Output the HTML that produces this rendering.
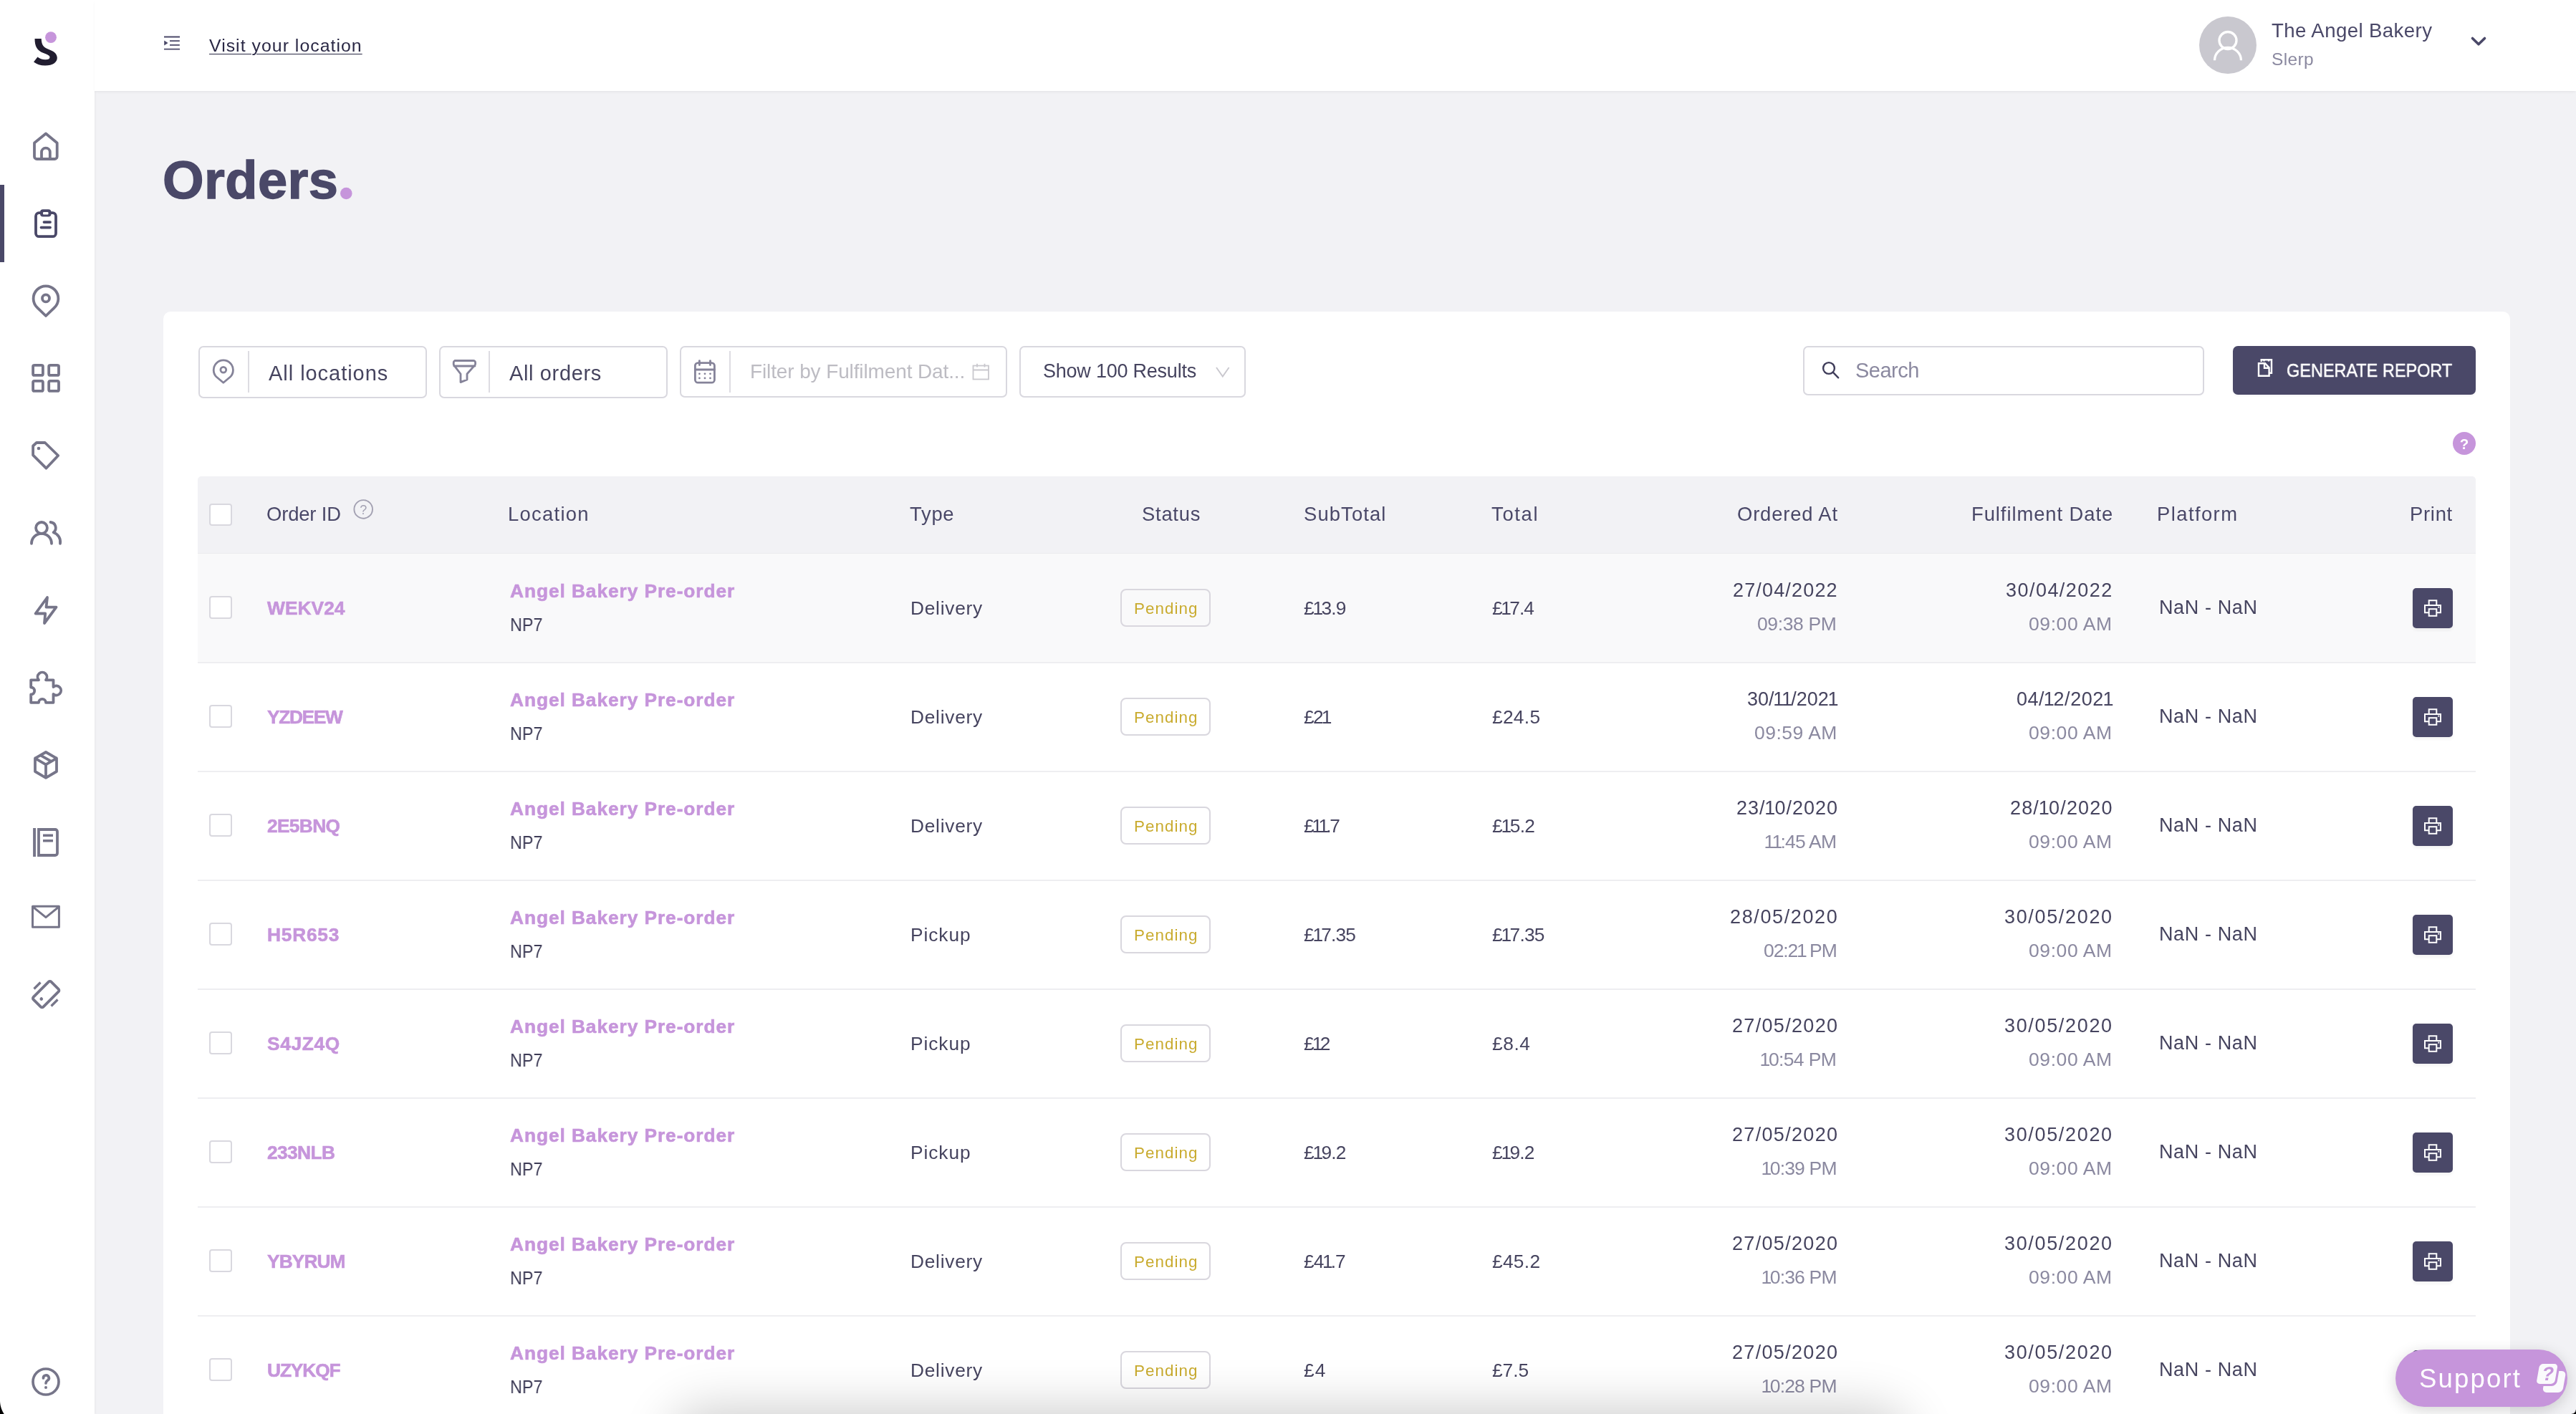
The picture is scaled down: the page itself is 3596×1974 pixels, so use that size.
<!DOCTYPE html>
<html><head><meta charset="utf-8"><title>Orders</title><style>
*{box-sizing:border-box;margin:0;padding:0}
html,body{width:3596px;height:1974px;overflow:hidden}
body{position:relative;background:#f2f2f5;font-family:"Liberation Sans",sans-serif}
.a{position:absolute}
.t{position:absolute;line-height:1;white-space:nowrap}
body{-webkit-font-smoothing:antialiased}
.t{will-change:transform}
svg{position:absolute;overflow:visible}
</style></head>
<body>
<div class="a" style="left:0;top:0;width:132px;height:1974px;background:#fff;box-shadow:1px 0 3px rgba(0,0,0,0.05)"></div>
<div class="a" style="left:132px;top:0;width:3464px;height:127px;background:#fff;box-shadow:0 2px 4px -1px rgba(0,0,0,0.07)"></div>
<div class="a" style="left:0;top:258px;width:6px;height:108px;background:#4a4868"></div>
<div class="a" style="left:228px;top:435px;width:3276px;height:1700px;background:#fff;border-radius:10px"></div>
<div class="a" style="left:277px;top:482.8px;width:319px;height:73.2px;border:2px solid #d9d8df;border-radius:7px;background:#fff"></div>
<div class="a" style="left:612.5px;top:482.8px;width:319.0px;height:73.2px;border:2px solid #d9d8df;border-radius:7px;background:#fff"></div>
<div class="a" style="left:948.5px;top:483.1px;width:457.0px;height:71.6px;border:2px solid #d9d8df;border-radius:7px;background:#fff"></div>
<div class="a" style="left:1422.5px;top:483.1px;width:316.5px;height:71.6px;border:2px solid #d9d8df;border-radius:7px;background:#fff"></div>
<div class="a" style="left:346.2px;top:490px;width:1.6px;height:57.5px;background:#dddce2"></div>
<div class="a" style="left:682.2px;top:490px;width:1.6px;height:57.5px;background:#dddce2"></div>
<div class="a" style="left:1018.2px;top:490px;width:1.6px;height:57.5px;background:#dddce2"></div>
<div class="a" style="left:2517px;top:483.1px;width:559.6px;height:68.8px;border:2px solid #d9d8df;border-radius:7px;background:#fff"></div>
<div class="a" style="left:3117px;top:482.9px;width:338.7px;height:67.9px;background:#4a4868;border-radius:7px;box-shadow:0 2px 3px rgba(0,0,0,0.04)"></div>
<div class="a" style="left:3424px;top:603px;width:32px;height:32px;border-radius:50%;background:#c695db"></div>
<div class="a" style="left:276px;top:665px;width:3180px;height:108px;background:#f2f2f5;border-radius:5px 5px 0 0"></div>
<div class="a" style="left:276px;top:772px;width:3180px;height:1.5px;background:#ececef"></div>
<div class="a" style="left:276px;top:773px;width:3180px;height:152px;background:#f9f9fa"></div>
<div class="a" style="left:276px;top:924px;width:3180px;height:2px;background:#eeeef1"></div>
<div class="a" style="left:276px;top:1076px;width:3180px;height:2px;background:#eeeef1"></div>
<div class="a" style="left:276px;top:1228px;width:3180px;height:2px;background:#eeeef1"></div>
<div class="a" style="left:276px;top:1380px;width:3180px;height:2px;background:#eeeef1"></div>
<div class="a" style="left:276px;top:1532px;width:3180px;height:2px;background:#eeeef1"></div>
<div class="a" style="left:276px;top:1684px;width:3180px;height:2px;background:#eeeef1"></div>
<div class="a" style="left:276px;top:1836px;width:3180px;height:2px;background:#eeeef1"></div>
<div class="a" style="left:276px;top:1988px;width:3180px;height:2px;background:#eeeef1"></div>
<div class="a" style="left:292px;top:702.5px;width:31.5px;height:31.5px;border:2px solid #d9d8df;border-radius:4px;background:#fff"></div>
<div class="a" style="left:292.2px;top:832px;width:31.5px;height:31.5px;border:2px solid #d9d8df;border-radius:4px;background:#fff"></div>
<div class="a" style="left:1564px;top:822px;width:125.8px;height:52.7px;border:2px solid #d9d7de;border-radius:8px"></div>
<div class="a" style="left:3368px;top:821px;width:56px;height:56px;background:#4a4868;border-radius:5px;box-shadow:0 3px 4px rgba(0,0,0,0.05)"></div>
<div class="a" style="left:292.2px;top:984px;width:31.5px;height:31.5px;border:2px solid #d9d8df;border-radius:4px;background:#fff"></div>
<div class="a" style="left:1564px;top:974px;width:125.8px;height:52.7px;border:2px solid #d9d7de;border-radius:8px"></div>
<div class="a" style="left:3368px;top:973px;width:56px;height:56px;background:#4a4868;border-radius:5px;box-shadow:0 3px 4px rgba(0,0,0,0.05)"></div>
<div class="a" style="left:292.2px;top:1136px;width:31.5px;height:31.5px;border:2px solid #d9d8df;border-radius:4px;background:#fff"></div>
<div class="a" style="left:1564px;top:1126px;width:125.8px;height:52.7px;border:2px solid #d9d7de;border-radius:8px"></div>
<div class="a" style="left:3368px;top:1125px;width:56px;height:56px;background:#4a4868;border-radius:5px;box-shadow:0 3px 4px rgba(0,0,0,0.05)"></div>
<div class="a" style="left:292.2px;top:1288px;width:31.5px;height:31.5px;border:2px solid #d9d8df;border-radius:4px;background:#fff"></div>
<div class="a" style="left:1564px;top:1278px;width:125.8px;height:52.7px;border:2px solid #d9d7de;border-radius:8px"></div>
<div class="a" style="left:3368px;top:1277px;width:56px;height:56px;background:#4a4868;border-radius:5px;box-shadow:0 3px 4px rgba(0,0,0,0.05)"></div>
<div class="a" style="left:292.2px;top:1440px;width:31.5px;height:31.5px;border:2px solid #d9d8df;border-radius:4px;background:#fff"></div>
<div class="a" style="left:1564px;top:1430px;width:125.8px;height:52.7px;border:2px solid #d9d7de;border-radius:8px"></div>
<div class="a" style="left:3368px;top:1429px;width:56px;height:56px;background:#4a4868;border-radius:5px;box-shadow:0 3px 4px rgba(0,0,0,0.05)"></div>
<div class="a" style="left:292.2px;top:1592px;width:31.5px;height:31.5px;border:2px solid #d9d8df;border-radius:4px;background:#fff"></div>
<div class="a" style="left:1564px;top:1582px;width:125.8px;height:52.7px;border:2px solid #d9d7de;border-radius:8px"></div>
<div class="a" style="left:3368px;top:1581px;width:56px;height:56px;background:#4a4868;border-radius:5px;box-shadow:0 3px 4px rgba(0,0,0,0.05)"></div>
<div class="a" style="left:292.2px;top:1744px;width:31.5px;height:31.5px;border:2px solid #d9d8df;border-radius:4px;background:#fff"></div>
<div class="a" style="left:1564px;top:1734px;width:125.8px;height:52.7px;border:2px solid #d9d7de;border-radius:8px"></div>
<div class="a" style="left:3368px;top:1733px;width:56px;height:56px;background:#4a4868;border-radius:5px;box-shadow:0 3px 4px rgba(0,0,0,0.05)"></div>
<div class="a" style="left:292.2px;top:1896px;width:31.5px;height:31.5px;border:2px solid #d9d8df;border-radius:4px;background:#fff"></div>
<div class="a" style="left:1564px;top:1886px;width:125.8px;height:52.7px;border:2px solid #d9d7de;border-radius:8px"></div>
<div class="a" style="left:3368px;top:1885px;width:56px;height:56px;background:#4a4868;border-radius:5px;box-shadow:0 3px 4px rgba(0,0,0,0.05)"></div>
<div class="t" style="top:52.01px;font-size:24.8px;color:#2a2845;letter-spacing:1.04px;left:292.0px;text-decoration:underline;text-decoration-thickness:1.2px;text-underline-offset:2.5px;">Visit your location</div>
<div class="t" style="top:28.84px;font-size:27.6px;color:#4a4868;letter-spacing:0.41px;left:3171.0px;">The Angel Bakery</div>
<div class="t" style="top:71.26px;font-size:24.5px;color:#8b89a0;letter-spacing:0.35px;left:3171.0px;">Slerp</div>
<div class="t" style="top:215.16px;font-size:74px;color:#4a4868;font-weight:700;letter-spacing:0.47px;left:227.2px;-webkit-text-stroke:1.4px #4a4868;">Orders</div>
<div class="t" style="top:507.45px;font-size:29px;color:#46445f;letter-spacing:0.96px;left:375.0px;">All locations</div>
<div class="t" style="top:507.45px;font-size:29px;color:#46445f;letter-spacing:0.64px;left:710.7px;">All orders</div>
<div class="t" style="top:504.70px;font-size:28px;color:#bdbcc3;letter-spacing:-0.12px;left:1046.6px;">Filter by Fulfilment Dat...</div>
<div class="t" style="top:504.94px;font-size:27px;color:#46445f;letter-spacing:-0.23px;left:1456.3px;">Show 100 Results</div>
<div class="t" style="top:502.65px;font-size:29px;color:#8b89a0;letter-spacing:-0.52px;left:2590.0px;">Search</div>
<div class="t" style="top:504.38px;font-size:26.6px;color:#ffffff;left:3191.5px;transform:scaleX(0.8823);transform-origin:left center;-webkit-text-stroke:0.5px #fff;">GENERATE REPORT</div>
<div class="t" style="top:704.01px;font-size:27.4px;color:#4a4868;letter-spacing:-0.15px;left:372.2px;">Order ID</div>
<div class="t" style="top:704.01px;font-size:27.4px;color:#4a4868;letter-spacing:1.29px;left:708.8px;">Location</div>
<div class="t" style="top:704.01px;font-size:27.4px;color:#4a4868;letter-spacing:0.74px;left:1270.0px;">Type</div>
<div class="t" style="top:704.01px;font-size:27.4px;color:#4a4868;letter-spacing:0.75px;left:1593.6px;">Status</div>
<div class="t" style="top:704.01px;font-size:27.4px;color:#4a4868;letter-spacing:1.12px;left:1819.6px;">SubTotal</div>
<div class="t" style="top:704.01px;font-size:27.4px;color:#4a4868;letter-spacing:1.69px;left:2082.0px;">Total</div>
<div class="t" style="top:704.01px;font-size:27.4px;color:#4a4868;letter-spacing:0.84px;right:1030.6px;margin-right:-0.84px;">Ordered At</div>
<div class="t" style="top:704.01px;font-size:27.4px;color:#4a4868;letter-spacing:0.93px;right:647.0px;margin-right:-0.93px;">Fulfilment Date</div>
<div class="t" style="top:704.01px;font-size:27.4px;color:#4a4868;letter-spacing:1.43px;left:3011.0px;">Platform</div>
<div class="t" style="top:704.01px;font-size:27.4px;color:#4a4868;letter-spacing:0.72px;right:172.8px;margin-right:-0.72px;">Print</div>
<div class="t" style="top:835.74px;font-size:26.3px;color:#c695db;font-weight:700;letter-spacing:0.07px;left:372.6px;-webkit-text-stroke:0.6px #c695db;">WEKV24</div>
<div class="t" style="top:811.74px;font-size:26.3px;color:#c695db;font-weight:700;letter-spacing:0.93px;left:711.5px;-webkit-text-stroke:0.6px #c695db;">Angel Bakery Pre-order</div>
<div class="t" style="top:858.54px;font-size:26.3px;color:#3d3b56;left:711.5px;transform:scaleX(0.8894);transform-origin:left center;">NP7</div>
<div class="t" style="top:835.54px;font-size:26.3px;color:#46445f;letter-spacing:0.75px;left:1271.0px;">Delivery</div>
<div class="t" style="top:838.64px;font-size:22.4px;color:#c9ab2e;letter-spacing:1.05px;left:1583.2px;">Pending</div>
<div class="t" style="top:835.94px;font-size:26.3px;color:#46445f;letter-spacing:-0.84px;left:1820.2px;">£<i style="font-style:normal;margin:0 -1.8px 0 -1.4px">1</i>3.9</div>
<div class="t" style="top:835.94px;font-size:26.3px;color:#46445f;letter-spacing:-0.91px;left:2082.6px;">£<i style="font-style:normal;margin:0 -1.8px 0 -1.4px">1</i>7.4</div>
<div class="t" style="top:810.94px;font-size:27px;color:#46445f;letter-spacing:1.16px;right:1031.0px;margin-right:-1.16px;">27/04/2022</div>
<div class="t" style="top:858.27px;font-size:26.5px;color:#8b89a0;letter-spacing:-0.38px;right:1031.8px;margin-right:0.38px;">09:38 PM</div>
<div class="t" style="top:811.04px;font-size:27px;color:#46445f;letter-spacing:1.46px;right:647.8px;margin-right:-1.46px;">30/04/2022</div>
<div class="t" style="top:858.27px;font-size:26.5px;color:#8b89a0;letter-spacing:0.58px;right:648.0px;margin-right:-0.58px;">09:00 AM</div>
<div class="t" style="top:835.34px;font-size:27px;color:#46445f;letter-spacing:0.62px;left:3013.5px;">NaN - NaN</div>
<div class="t" style="top:987.74px;font-size:26.3px;color:#c695db;font-weight:700;letter-spacing:-1.34px;left:372.6px;-webkit-text-stroke:0.6px #c695db;">YZDEEW</div>
<div class="t" style="top:963.74px;font-size:26.3px;color:#c695db;font-weight:700;letter-spacing:0.93px;left:711.5px;-webkit-text-stroke:0.6px #c695db;">Angel Bakery Pre-order</div>
<div class="t" style="top:1010.54px;font-size:26.3px;color:#3d3b56;left:711.5px;transform:scaleX(0.8894);transform-origin:left center;">NP7</div>
<div class="t" style="top:987.54px;font-size:26.3px;color:#46445f;letter-spacing:0.75px;left:1271.0px;">Delivery</div>
<div class="t" style="top:990.64px;font-size:22.4px;color:#c9ab2e;letter-spacing:1.05px;left:1583.2px;">Pending</div>
<div class="t" style="top:987.94px;font-size:26.3px;color:#46445f;letter-spacing:-1.61px;left:1820.2px;">£2<i style="font-style:normal;margin:0 -1.8px 0 -1.4px">1</i></div>
<div class="t" style="top:987.94px;font-size:26.3px;color:#46445f;letter-spacing:0.30px;left:2082.6px;">£24.5</div>
<div class="t" style="top:962.94px;font-size:27px;color:#46445f;letter-spacing:0.01px;right:1031.0px;margin-right:-0.01px;">30/<i style="font-style:normal;margin:0 -1.8px 0 -1.4px">1</i><i style="font-style:normal;margin:0 -1.8px 0 -1.4px">1</i>/202<i style="font-style:normal;margin:0 -1.8px 0 -1.4px">1</i></div>
<div class="t" style="top:1010.27px;font-size:26.5px;color:#8b89a0;letter-spacing:0.49px;right:1031.8px;margin-right:-0.49px;">09:59 AM</div>
<div class="t" style="top:963.04px;font-size:27px;color:#46445f;letter-spacing:0.54px;right:647.8px;margin-right:-0.54px;">04/<i style="font-style:normal;margin:0 -1.8px 0 -1.4px">1</i>2/202<i style="font-style:normal;margin:0 -1.8px 0 -1.4px">1</i></div>
<div class="t" style="top:1010.27px;font-size:26.5px;color:#8b89a0;letter-spacing:0.58px;right:648.0px;margin-right:-0.58px;">09:00 AM</div>
<div class="t" style="top:987.34px;font-size:27px;color:#46445f;letter-spacing:0.62px;left:3013.5px;">NaN - NaN</div>
<div class="t" style="top:1139.74px;font-size:26.3px;color:#c695db;font-weight:700;letter-spacing:-0.65px;left:372.6px;-webkit-text-stroke:0.6px #c695db;">2E5BNQ</div>
<div class="t" style="top:1115.74px;font-size:26.3px;color:#c695db;font-weight:700;letter-spacing:0.93px;left:711.5px;-webkit-text-stroke:0.6px #c695db;">Angel Bakery Pre-order</div>
<div class="t" style="top:1162.54px;font-size:26.3px;color:#3d3b56;left:711.5px;transform:scaleX(0.8894);transform-origin:left center;">NP7</div>
<div class="t" style="top:1139.54px;font-size:26.3px;color:#46445f;letter-spacing:0.75px;left:1271.0px;">Delivery</div>
<div class="t" style="top:1142.64px;font-size:22.4px;color:#c9ab2e;letter-spacing:1.05px;left:1583.2px;">Pending</div>
<div class="t" style="top:1139.94px;font-size:26.3px;color:#46445f;letter-spacing:-2.12px;left:1820.2px;">£<i style="font-style:normal;margin:0 -1.8px 0 -1.4px">1</i><i style="font-style:normal;margin:0 -1.8px 0 -1.4px">1</i>.7</div>
<div class="t" style="top:1139.94px;font-size:26.3px;color:#46445f;letter-spacing:-0.66px;left:2082.6px;">£<i style="font-style:normal;margin:0 -1.8px 0 -1.4px">1</i>5.2</div>
<div class="t" style="top:1114.94px;font-size:27px;color:#46445f;letter-spacing:1.00px;right:1031.0px;margin-right:-1.00px;">23/<i style="font-style:normal;margin:0 -1.8px 0 -1.4px">1</i>0/2020</div>
<div class="t" style="top:1162.27px;font-size:26.5px;color:#8b89a0;letter-spacing:-0.80px;right:1031.8px;margin-right:0.80px;"><i style="font-style:normal;margin:0 -1.8px 0 -1.4px">1</i><i style="font-style:normal;margin:0 -1.8px 0 -1.4px">1</i>:45 AM</div>
<div class="t" style="top:1115.04px;font-size:27px;color:#46445f;letter-spacing:1.17px;right:647.8px;margin-right:-1.17px;">28/<i style="font-style:normal;margin:0 -1.8px 0 -1.4px">1</i>0/2020</div>
<div class="t" style="top:1162.27px;font-size:26.5px;color:#8b89a0;letter-spacing:0.58px;right:648.0px;margin-right:-0.58px;">09:00 AM</div>
<div class="t" style="top:1139.34px;font-size:27px;color:#46445f;letter-spacing:0.62px;left:3013.5px;">NaN - NaN</div>
<div class="t" style="top:1291.74px;font-size:26.3px;color:#c695db;font-weight:700;letter-spacing:0.78px;left:372.6px;-webkit-text-stroke:0.6px #c695db;">H5R653</div>
<div class="t" style="top:1267.74px;font-size:26.3px;color:#c695db;font-weight:700;letter-spacing:0.93px;left:711.5px;-webkit-text-stroke:0.6px #c695db;">Angel Bakery Pre-order</div>
<div class="t" style="top:1314.54px;font-size:26.3px;color:#3d3b56;left:711.5px;transform:scaleX(0.8894);transform-origin:left center;">NP7</div>
<div class="t" style="top:1291.54px;font-size:26.3px;color:#46445f;letter-spacing:0.93px;left:1271.0px;">Pickup</div>
<div class="t" style="top:1294.64px;font-size:22.4px;color:#c9ab2e;letter-spacing:1.05px;left:1583.2px;">Pending</div>
<div class="t" style="top:1291.94px;font-size:26.3px;color:#46445f;letter-spacing:-0.86px;left:1820.2px;">£<i style="font-style:normal;margin:0 -1.8px 0 -1.4px">1</i>7.35</div>
<div class="t" style="top:1291.94px;font-size:26.3px;color:#46445f;letter-spacing:-0.76px;left:2082.6px;">£<i style="font-style:normal;margin:0 -1.8px 0 -1.4px">1</i>7.35</div>
<div class="t" style="top:1266.94px;font-size:27px;color:#46445f;letter-spacing:1.62px;right:1031.0px;margin-right:-1.62px;">28/05/2020</div>
<div class="t" style="top:1314.27px;font-size:26.5px;color:#8b89a0;letter-spacing:-1.08px;right:1031.8px;margin-right:1.08px;">02:2<i style="font-style:normal;margin:0 -1.8px 0 -1.4px">1</i> PM</div>
<div class="t" style="top:1267.04px;font-size:27px;color:#46445f;letter-spacing:1.66px;right:647.8px;margin-right:-1.66px;">30/05/2020</div>
<div class="t" style="top:1314.27px;font-size:26.5px;color:#8b89a0;letter-spacing:0.58px;right:648.0px;margin-right:-0.58px;">09:00 AM</div>
<div class="t" style="top:1291.34px;font-size:27px;color:#46445f;letter-spacing:0.62px;left:3013.5px;">NaN - NaN</div>
<div class="t" style="top:1443.74px;font-size:26.3px;color:#c695db;font-weight:700;letter-spacing:0.65px;left:372.6px;-webkit-text-stroke:0.6px #c695db;">S4JZ4Q</div>
<div class="t" style="top:1419.74px;font-size:26.3px;color:#c695db;font-weight:700;letter-spacing:0.93px;left:711.5px;-webkit-text-stroke:0.6px #c695db;">Angel Bakery Pre-order</div>
<div class="t" style="top:1466.54px;font-size:26.3px;color:#3d3b56;left:711.5px;transform:scaleX(0.8894);transform-origin:left center;">NP7</div>
<div class="t" style="top:1443.54px;font-size:26.3px;color:#46445f;letter-spacing:0.93px;left:1271.0px;">Pickup</div>
<div class="t" style="top:1446.64px;font-size:22.4px;color:#c9ab2e;letter-spacing:1.05px;left:1583.2px;">Pending</div>
<div class="t" style="top:1443.94px;font-size:26.3px;color:#46445f;letter-spacing:-1.62px;left:1820.2px;">£<i style="font-style:normal;margin:0 -1.8px 0 -1.4px">1</i>2</div>
<div class="t" style="top:1443.94px;font-size:26.3px;color:#46445f;letter-spacing:0.60px;left:2082.6px;">£8.4</div>
<div class="t" style="top:1418.94px;font-size:27px;color:#46445f;letter-spacing:1.32px;right:1031.0px;margin-right:-1.32px;">27/05/2020</div>
<div class="t" style="top:1466.27px;font-size:26.5px;color:#8b89a0;letter-spacing:-0.64px;right:1031.8px;margin-right:0.64px;"><i style="font-style:normal;margin:0 -1.8px 0 -1.4px">1</i>0:54 PM</div>
<div class="t" style="top:1419.04px;font-size:27px;color:#46445f;letter-spacing:1.66px;right:647.8px;margin-right:-1.66px;">30/05/2020</div>
<div class="t" style="top:1466.27px;font-size:26.5px;color:#8b89a0;letter-spacing:0.58px;right:648.0px;margin-right:-0.58px;">09:00 AM</div>
<div class="t" style="top:1443.34px;font-size:27px;color:#46445f;letter-spacing:0.62px;left:3013.5px;">NaN - NaN</div>
<div class="t" style="top:1595.74px;font-size:26.3px;color:#c695db;font-weight:700;letter-spacing:-0.60px;left:372.6px;-webkit-text-stroke:0.6px #c695db;">233NLB</div>
<div class="t" style="top:1571.74px;font-size:26.3px;color:#c695db;font-weight:700;letter-spacing:0.93px;left:711.5px;-webkit-text-stroke:0.6px #c695db;">Angel Bakery Pre-order</div>
<div class="t" style="top:1618.54px;font-size:26.3px;color:#3d3b56;left:711.5px;transform:scaleX(0.8894);transform-origin:left center;">NP7</div>
<div class="t" style="top:1595.54px;font-size:26.3px;color:#46445f;letter-spacing:0.93px;left:1271.0px;">Pickup</div>
<div class="t" style="top:1598.64px;font-size:22.4px;color:#c9ab2e;letter-spacing:1.05px;left:1583.2px;">Pending</div>
<div class="t" style="top:1595.94px;font-size:26.3px;color:#46445f;letter-spacing:-0.81px;left:1820.2px;">£<i style="font-style:normal;margin:0 -1.8px 0 -1.4px">1</i>9.2</div>
<div class="t" style="top:1595.94px;font-size:26.3px;color:#46445f;letter-spacing:-0.81px;left:2082.6px;">£<i style="font-style:normal;margin:0 -1.8px 0 -1.4px">1</i>9.2</div>
<div class="t" style="top:1570.94px;font-size:27px;color:#46445f;letter-spacing:1.32px;right:1031.0px;margin-right:-1.32px;">27/05/2020</div>
<div class="t" style="top:1618.27px;font-size:26.5px;color:#8b89a0;letter-spacing:-0.82px;right:1031.8px;margin-right:0.82px;"><i style="font-style:normal;margin:0 -1.8px 0 -1.4px">1</i>0:39 PM</div>
<div class="t" style="top:1571.04px;font-size:27px;color:#46445f;letter-spacing:1.66px;right:647.8px;margin-right:-1.66px;">30/05/2020</div>
<div class="t" style="top:1618.27px;font-size:26.5px;color:#8b89a0;letter-spacing:0.58px;right:648.0px;margin-right:-0.58px;">09:00 AM</div>
<div class="t" style="top:1595.34px;font-size:27px;color:#46445f;letter-spacing:0.62px;left:3013.5px;">NaN - NaN</div>
<div class="t" style="top:1747.74px;font-size:26.3px;color:#c695db;font-weight:700;letter-spacing:-0.89px;left:372.6px;-webkit-text-stroke:0.6px #c695db;">YBYRUM</div>
<div class="t" style="top:1723.74px;font-size:26.3px;color:#c695db;font-weight:700;letter-spacing:0.93px;left:711.5px;-webkit-text-stroke:0.6px #c695db;">Angel Bakery Pre-order</div>
<div class="t" style="top:1770.54px;font-size:26.3px;color:#3d3b56;left:711.5px;transform:scaleX(0.8894);transform-origin:left center;">NP7</div>
<div class="t" style="top:1747.54px;font-size:26.3px;color:#46445f;letter-spacing:0.75px;left:1271.0px;">Delivery</div>
<div class="t" style="top:1750.64px;font-size:22.4px;color:#c9ab2e;letter-spacing:1.05px;left:1583.2px;">Pending</div>
<div class="t" style="top:1747.94px;font-size:26.3px;color:#46445f;letter-spacing:-0.99px;left:1820.2px;">£4<i style="font-style:normal;margin:0 -1.8px 0 -1.4px">1</i>.7</div>
<div class="t" style="top:1747.94px;font-size:26.3px;color:#46445f;letter-spacing:0.30px;left:2082.6px;">£45.2</div>
<div class="t" style="top:1722.94px;font-size:27px;color:#46445f;letter-spacing:1.32px;right:1031.0px;margin-right:-1.32px;">27/05/2020</div>
<div class="t" style="top:1770.27px;font-size:26.5px;color:#8b89a0;letter-spacing:-0.82px;right:1031.8px;margin-right:0.82px;"><i style="font-style:normal;margin:0 -1.8px 0 -1.4px">1</i>0:36 PM</div>
<div class="t" style="top:1723.04px;font-size:27px;color:#46445f;letter-spacing:1.66px;right:647.8px;margin-right:-1.66px;">30/05/2020</div>
<div class="t" style="top:1770.27px;font-size:26.5px;color:#8b89a0;letter-spacing:0.58px;right:648.0px;margin-right:-0.58px;">09:00 AM</div>
<div class="t" style="top:1747.34px;font-size:27px;color:#46445f;letter-spacing:0.62px;left:3013.5px;">NaN - NaN</div>
<div class="t" style="top:1899.74px;font-size:26.3px;color:#c695db;font-weight:700;letter-spacing:-1.10px;left:372.6px;-webkit-text-stroke:0.6px #c695db;">UZYKQF</div>
<div class="t" style="top:1875.74px;font-size:26.3px;color:#c695db;font-weight:700;letter-spacing:0.93px;left:711.5px;-webkit-text-stroke:0.6px #c695db;">Angel Bakery Pre-order</div>
<div class="t" style="top:1922.54px;font-size:26.3px;color:#3d3b56;left:711.5px;transform:scaleX(0.8894);transform-origin:left center;">NP7</div>
<div class="t" style="top:1899.54px;font-size:26.3px;color:#46445f;letter-spacing:0.75px;left:1271.0px;">Delivery</div>
<div class="t" style="top:1902.64px;font-size:22.4px;color:#c9ab2e;letter-spacing:1.05px;left:1583.2px;">Pending</div>
<div class="t" style="top:1899.94px;font-size:26.3px;color:#46445f;letter-spacing:1.13px;left:1820.2px;">£4</div>
<div class="t" style="top:1899.94px;font-size:26.3px;color:#46445f;letter-spacing:-0.06px;left:2082.6px;">£7.5</div>
<div class="t" style="top:1874.94px;font-size:27px;color:#46445f;letter-spacing:1.32px;right:1031.0px;margin-right:-1.32px;">27/05/2020</div>
<div class="t" style="top:1922.27px;font-size:26.5px;color:#8b89a0;letter-spacing:-0.82px;right:1031.8px;margin-right:0.82px;"><i style="font-style:normal;margin:0 -1.8px 0 -1.4px">1</i>0:28 PM</div>
<div class="t" style="top:1875.04px;font-size:27px;color:#46445f;letter-spacing:1.66px;right:647.8px;margin-right:-1.66px;">30/05/2020</div>
<div class="t" style="top:1922.27px;font-size:26.5px;color:#8b89a0;letter-spacing:0.58px;right:648.0px;margin-right:-0.58px;">09:00 AM</div>
<div class="t" style="top:1899.34px;font-size:27px;color:#46445f;letter-spacing:0.62px;left:3013.5px;">NaN - NaN</div>
<svg class="a" style="left:0;top:0" width="3596" height="1974" viewBox="0 0 3596 1974"><path d="M48.5 54 H57.7 C58 63 61 66 67 68.6 L71 70.2 C77 72.6 79.8 76.5 79.8 80.8 C79.8 87 74 91.5 63 91.5 C56.5 91.5 51 89.5 47 86.5 L52.5 79.5 C55 81.5 59 83.3 63.5 83.3 C67.5 83.3 69.5 82 69.5 80 C69.5 78 67.5 76.8 64.5 75.6 L60 73.8 C52 70.5 48.5 65 48.5 54 Z" fill="#211d30"/><circle cx="71" cy="52.2" r="7.9" fill="#c695db"/><g stroke="#4a4868" stroke-width="1.8"><path d="M229 51.5 H251 M237 57.2 H250.8 M237 62.8 H250.8 M229 68.6 H251"/></g><path d="M229.2 56.5 L234.5 60 L229.2 63.5 Z" fill="#4a4868"/><path fill="none" stroke="#767589" stroke-width="3.8" stroke-linecap="round" stroke-linejoin="round" d="M64 186.5 L48 199.5 V218.5 A3.5 3.5 0 0 0 51.5 222 H76.2 A3.5 3.5 0 0 0 79.7 218.5 V199.5 Z"/><path fill="none" stroke="#767589" stroke-width="3.8" stroke-linecap="round" stroke-linejoin="round" d="M58 222 V212.5 A5.9 5.9 0 0 1 69.8 212.5 V222"/><rect fill="none" stroke="#4a4868" stroke-width="3.8" stroke-linecap="round" stroke-linejoin="round" x="50" y="297.2" width="28" height="33" rx="4.5"/><rect x="56" y="292.3" width="15.5" height="10.3" rx="4" fill="#4a4868"/><rect x="60" y="296" width="7.5" height="3.5" rx="1" fill="#fff"/><path fill="none" stroke="#4a4868" stroke-width="3.8" stroke-linecap="round" stroke-linejoin="round" stroke-width="3.6" d="M61.5 310.1 H70 M57.5 317.6 H70"/><path fill="none" stroke="#767589" stroke-width="3.8" stroke-linecap="round" stroke-linejoin="round" d="M64 441 L52.2 429.6 A17.4 17.4 0 1 1 75.8 429.6 Z"/><circle fill="none" stroke="#767589" stroke-width="3.8" stroke-linecap="round" stroke-linejoin="round" cx="64" cy="416.4" r="5"/><rect fill="none" stroke="#767589" stroke-width="3.8" stroke-linecap="round" stroke-linejoin="round" x="46.1" y="509.8" width="13.8" height="14.1" rx="2"/><rect fill="none" stroke="#767589" stroke-width="3.8" stroke-linecap="round" stroke-linejoin="round" x="68.2" y="509.8" width="13.8" height="14.1" rx="2"/><rect fill="none" stroke="#767589" stroke-width="3.8" stroke-linecap="round" stroke-linejoin="round" x="46.1" y="531.8" width="13.8" height="14.1" rx="2"/><rect fill="none" stroke="#767589" stroke-width="3.8" stroke-linecap="round" stroke-linejoin="round" x="68.2" y="531.8" width="13.8" height="14.1" rx="2"/><path fill="none" stroke="#767589" stroke-width="3.8" stroke-linecap="round" stroke-linejoin="round" d="M51 618 H62.8 L81.2 636 L64.4 653.7 L46.1 635.3 V622.5 Z"/><circle cx="54" cy="626" r="2.3" fill="#767589"/><circle fill="none" stroke="#767589" stroke-width="3.8" stroke-linecap="round" stroke-linejoin="round" cx="58" cy="736.9" r="7.9"/><path fill="none" stroke="#767589" stroke-width="3.8" stroke-linecap="round" stroke-linejoin="round" d="M44 758.8 A14 14 0 0 1 72 758.8"/><path fill="none" stroke="#767589" stroke-width="3.8" stroke-linecap="round" stroke-linejoin="round" d="M70.5 729 A7.9 7.9 0 0 1 74.6 743.2 A14 14 0 0 1 84 758.8"/><path fill="none" stroke="#767589" stroke-width="3.8" stroke-linecap="round" stroke-linejoin="round" d="M66 834 L49.6 856.5 H63.2 L62 870 L78.5 847.6 H64.5 Z"/><path fill="none" stroke="#767589" stroke-width="3.8" stroke-linecap="round" stroke-linejoin="round" stroke-width="3.2" d="M43.2 949.3 H54 A6.5 6.5 0 1 1 64 949.3 H74.5 V959 A6.5 6.5 0 1 1 74.5 969 V980.8 H64 A5 5 0 0 0 54 980.8 H43.2 V969.5 A5 5 0 0 0 43.2 959.5 Z"/><path fill="none" stroke="#767589" stroke-width="3.8" stroke-linecap="round" stroke-linejoin="round" d="M64 1050 L79 1058.6 V1077 L64 1085.8 L49 1077 V1058.6 Z M49 1058.6 L64 1067.3 L79 1058.6 M64 1067.3 V1085.8 M56.5 1054.3 L71.5 1062.9"/><rect x="46.1" y="1156" width="3.9" height="40" fill="#767589"/><path fill="none" stroke="#767589" stroke-width="3.8" d="M54 1158 H77 A3 3 0 0 1 80 1161 V1191 A3 3 0 0 1 77 1194 H54 Z"/><path fill="none" stroke="#767589" stroke-width="3.6" d="M60 1166.2 H74 M60 1173.8 H74"/><path fill="none" stroke="#767589" stroke-width="3" stroke-linejoin="round" d="M45.5 1265.3 H82.4 V1294.2 H45.5 Z M46.5 1266.5 L64 1280.6 L81.5 1266.5"/><g transform="rotate(-45 64 1388)"><rect fill="none" stroke="#767589" stroke-width="3.8" stroke-linecap="round" stroke-linejoin="round" stroke-width="3.2" x="46.5" y="1378.5" width="35" height="19.5" rx="2.5"/><circle cx="55" cy="1388.2" r="2.3" fill="#767589"/></g><path fill="none" stroke="#767589" stroke-width="3.2" d="M47.5 1380.5 L56.5 1371.5 M71.5 1404.5 L80.5 1395.5"/><circle fill="none" stroke="#767589" stroke-width="3.7" cx="64" cy="1929" r="18"/><path fill="none" stroke="#767589" stroke-width="3.7" stroke-linecap="round" d="M60.5 1924 A3.9 3.9 0 1 1 66.5 1927 C64.5 1928.5 64 1929.5 64 1931"/><circle cx="64" cy="1937" r="2" fill="#767589"/><circle cx="3110" cy="63" r="40" fill="#c9c8cf"/><circle cx="3110" cy="56.5" r="12" fill="none" stroke="#fff" stroke-width="3.3"/><path d="M3091.5 84.3 A18.5 18 0 0 1 3128.5 84.3" fill="none" stroke="#fff" stroke-width="3.3"/><path d="M3451.5 53.5 L3460 61.8 L3468.5 53.5" fill="none" stroke="#4a4868" stroke-width="3.6" stroke-linecap="round" stroke-linejoin="round"/><circle cx="483.3" cy="270" r="8.3" fill="#c695db"/><path fill="none" stroke="#858399" stroke-width="2.8" stroke-linecap="round" stroke-linejoin="round" d="M311.8 534.3 L302.3 526.3 A13.6 13.6 0 1 1 321.3 526.3 Z"/><circle fill="none" stroke="#858399" stroke-width="2.8" stroke-linecap="round" stroke-linejoin="round" cx="311.8" cy="516.2" r="3.9"/><path fill="none" stroke="#858399" stroke-width="2.8" stroke-linecap="round" stroke-linejoin="round" d="M635 503.5 H660.8 A2.8 2.8 0 0 1 663.6 506.3 V508 A2.8 2.8 0 0 1 663 509.6 L652 522 V530 L643 533.6 V522 L633.5 509.6 A2.8 2.8 0 0 1 633.2 508 V506.3 A2.8 2.8 0 0 1 636 503.5 Z M633.8 511 H663"/><rect fill="none" stroke="#858399" stroke-width="2.8" stroke-linecap="round" stroke-linejoin="round" stroke-width="2.7" x="970.4" y="506.6" width="27" height="27.6" rx="4"/><path fill="none" stroke="#858399" stroke-width="2.8" stroke-linecap="round" stroke-linejoin="round" stroke-width="2.7" d="M976.4 503.6 V509.6 M991.5 503.6 V509.6 M970.4 516 H997.4"/><circle cx="976.4" cy="521.8" r="1.4" fill="#858399"/><circle cx="976.4" cy="527.9" r="1.4" fill="#858399"/><circle cx="984" cy="521.8" r="1.4" fill="#858399"/><circle cx="984" cy="527.9" r="1.4" fill="#858399"/><circle cx="991.5" cy="521.8" r="1.4" fill="#858399"/><circle cx="991.5" cy="527.9" r="1.4" fill="#858399"/><g fill="none" stroke="#c9c8ce" stroke-width="1.8"><rect x="1358.5" y="510.5" width="21.5" height="19"/><path d="M1358.5 516.5 H1380 M1364 507.7 V512.5 M1374.5 507.7 V512.5"/></g><path d="M1698 513 L1706.8 525.5 L1715.6 513" fill="none" stroke="#c9c8ce" stroke-width="1.9"/><circle cx="2553" cy="514" r="7.9" fill="none" stroke="#3f3d5a" stroke-width="2.4"/><path d="M2558.7 519.7 L2566.2 527.3" stroke="#3f3d5a" stroke-width="2.4" stroke-linecap="round"/><g fill="none" stroke="#fff" stroke-width="2.4"><path d="M3156.7 505 V502.3 H3171 V520.8 H3168"/><path d="M3160.5 501.6 V504.5 M3167 501.6 V504.5"/><path d="M3153 507.3 H3162 L3167.6 513.3 V524.8 H3153 Z M3161 507.5 V513.8 H3167.5"/></g><text x="3440" y="626.6" text-anchor="middle" font-family="Liberation Sans" font-weight="700" font-size="20.5" fill="#fff">?</text><circle cx="507.2" cy="710.9" r="12.8" fill="none" stroke="#a3a1b2" stroke-width="1.9"/><text x="507.2" y="717.6" text-anchor="middle" font-family="Liberation Sans" font-size="18" fill="#a3a1b2">?</text><g transform="translate(0 0)" fill="none" stroke="#fff" stroke-width="2"><path d="M3390.7 844 V838.3 H3401.3 V844"/><path d="M3390.7 855.3 H3385 V845 H3407 V855.3 H3401.3"/><rect x="3390.7" y="850.2" width="10.6" height="9.6"/></g><circle cx="3404.3" cy="847.7" r="1.1" fill="#fff"/><g transform="translate(0 152)" fill="none" stroke="#fff" stroke-width="2"><path d="M3390.7 844 V838.3 H3401.3 V844"/><path d="M3390.7 855.3 H3385 V845 H3407 V855.3 H3401.3"/><rect x="3390.7" y="850.2" width="10.6" height="9.6"/></g><circle cx="3404.3" cy="999.7" r="1.1" fill="#fff"/><g transform="translate(0 304)" fill="none" stroke="#fff" stroke-width="2"><path d="M3390.7 844 V838.3 H3401.3 V844"/><path d="M3390.7 855.3 H3385 V845 H3407 V855.3 H3401.3"/><rect x="3390.7" y="850.2" width="10.6" height="9.6"/></g><circle cx="3404.3" cy="1151.7" r="1.1" fill="#fff"/><g transform="translate(0 456)" fill="none" stroke="#fff" stroke-width="2"><path d="M3390.7 844 V838.3 H3401.3 V844"/><path d="M3390.7 855.3 H3385 V845 H3407 V855.3 H3401.3"/><rect x="3390.7" y="850.2" width="10.6" height="9.6"/></g><circle cx="3404.3" cy="1303.7" r="1.1" fill="#fff"/><g transform="translate(0 608)" fill="none" stroke="#fff" stroke-width="2"><path d="M3390.7 844 V838.3 H3401.3 V844"/><path d="M3390.7 855.3 H3385 V845 H3407 V855.3 H3401.3"/><rect x="3390.7" y="850.2" width="10.6" height="9.6"/></g><circle cx="3404.3" cy="1455.7" r="1.1" fill="#fff"/><g transform="translate(0 760)" fill="none" stroke="#fff" stroke-width="2"><path d="M3390.7 844 V838.3 H3401.3 V844"/><path d="M3390.7 855.3 H3385 V845 H3407 V855.3 H3401.3"/><rect x="3390.7" y="850.2" width="10.6" height="9.6"/></g><circle cx="3404.3" cy="1607.7" r="1.1" fill="#fff"/><g transform="translate(0 912)" fill="none" stroke="#fff" stroke-width="2"><path d="M3390.7 844 V838.3 H3401.3 V844"/><path d="M3390.7 855.3 H3385 V845 H3407 V855.3 H3401.3"/><rect x="3390.7" y="850.2" width="10.6" height="9.6"/></g><circle cx="3404.3" cy="1759.7" r="1.1" fill="#fff"/><g transform="translate(0 1064)" fill="none" stroke="#fff" stroke-width="2"><path d="M3390.7 844 V838.3 H3401.3 V844"/><path d="M3390.7 855.3 H3385 V845 H3407 V855.3 H3401.3"/><rect x="3390.7" y="850.2" width="10.6" height="9.6"/></g><circle cx="3404.3" cy="1911.7" r="1.1" fill="#fff"/></svg>
<div class="a" style="left:960px;top:1992px;width:1680px;height:50px;border-radius:25px;background:#000;box-shadow:0 0 70px 25px rgba(0,0,0,0.20)"></div>
<div class="a" style="left:3344px;top:1883.6px;width:240px;height:80px;border-radius:40px;background:#c695db;box-shadow:0 5px 20px rgba(0,0,0,0.17)"></div>
<svg class="a" style="left:0;top:0" width="3596" height="1974"><g transform="translate(0 1924) skewX(-10) translate(0 -1924)"><rect x="3552.5" y="1914" width="28" height="30" rx="6" fill="#fafafc"/><rect x="3539" y="1901" width="31.5" height="34" rx="6.5" fill="#c695db"/><rect x="3541.8" y="1904" width="25.5" height="28" rx="5" fill="#fafafc"/><text x="3556" y="1927.5" text-anchor="middle" font-family="Liberation Sans" font-weight="700" font-size="27" fill="#c695db">?</text></g></svg>
<div class="t" style="top:1907.30px;font-size:36.5px;color:#ffffff;letter-spacing:2.19px;left:3376.5px;">Support</div><div class="a" style="left:0;top:1955px;width:35px;height:19px;background:radial-gradient(circle at 34.5px 0px, rgba(0,0,0,0) 34px, #000 35px)"></div><div class="a" style="left:3590px;top:1968px;width:6px;height:6px;background:radial-gradient(circle at 0px 0px, rgba(0,0,0,0) 5px, #000 6.5px)"></div></body></html>
